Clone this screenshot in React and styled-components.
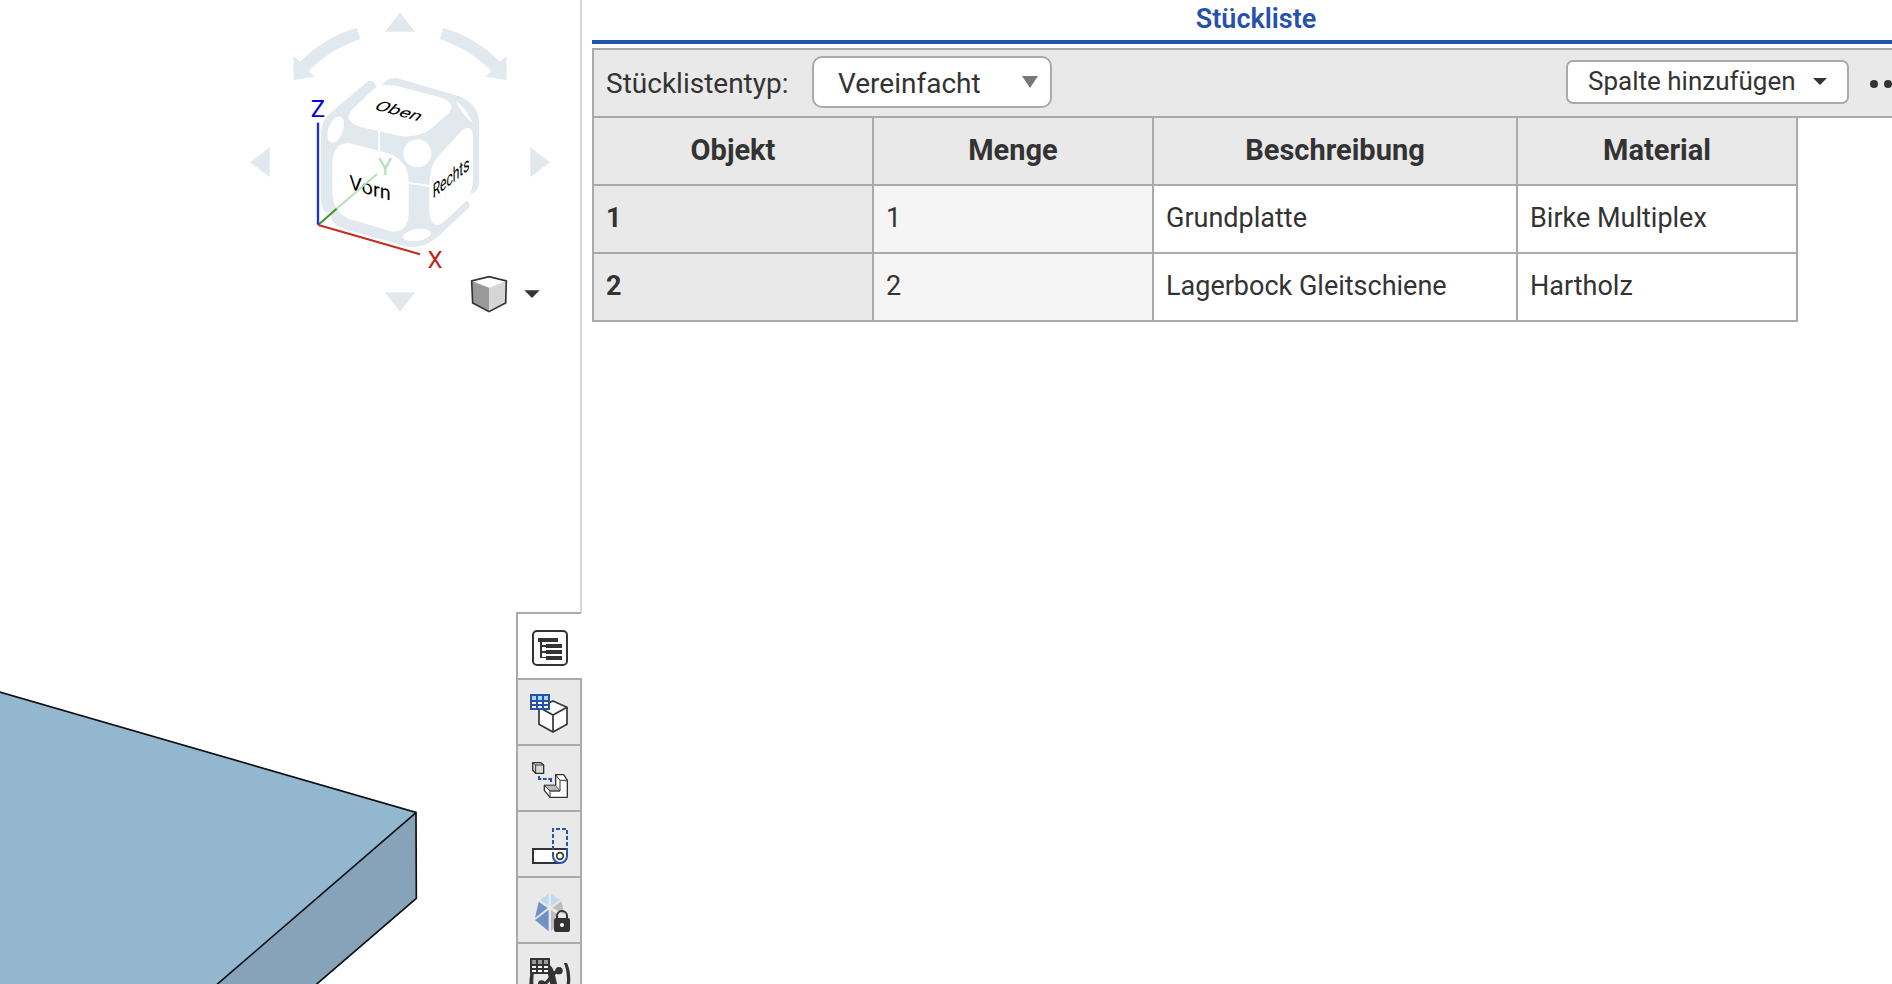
import React from "react";
import styled, { createGlobalStyle } from "styled-components";

const ink = "#333333";
const line = "#aaaaaa";
const blue = "#2651ad";
const cubeGray = "#e1e8ee";

const GlobalStyle = createGlobalStyle`
  *, *::before, *::after { box-sizing: border-box; }
  body {
    margin: 0;
    background: #ffffff;
    color: ${ink};
    font-family: Roboto, "Liberation Sans", sans-serif;
    font-size: 27px;
    line-height: 32px;
  }
`;

const Workspace = styled.main`
  display: flex;
  height: 100vh;
  overflow: hidden;
`;

const Viewport = styled.section`
  position: relative;
  flex: 0 0 582px;
  border-right: 2px solid #d5d5d5;
`;

const Model = styled.svg`
  position: absolute;
  left: 0;
  bottom: 0;
  width: 430px;
  height: 314px;
`;

const ViewNavigator = styled.div`
  position: absolute;
  top: 0;
  right: 20px;
  width: 320px;
`;

const CubeDrawing = styled.svg`
  display: block;
  width: 320px;
  height: 330px;
`;

const ViewMenuButton = styled.button`
  position: absolute;
  right: 12px;
  bottom: 12px;
  display: flex;
  padding: 0;
  border: 0;
  background: none;
  cursor: pointer;
`;

const SideTabs = styled.nav`
  position: absolute;
  top: 612px;
  right: -2px;
  bottom: 0;
  width: 66px;
  overflow: hidden;
`;

const SideTab = styled.button`
  display: block;
  width: 100%;
  height: 66px;
  padding: 0;
  border: solid ${line};
  border-width: 2px 2px 0;
  border-right-color: ${(p) => (p.$active ? "#ffffff" : line)};
  background: ${(p) => (p.$active ? "#ffffff" : "#e9e9e9")};
  cursor: pointer;

  svg {
    display: block;
    width: 62px;
    height: 64px;
  }
`;

const PanelClip = styled.section`
  flex: 1;
  min-width: 0;
  padding-left: 10px;
  overflow: hidden;
`;

const Panel = styled.div`
  margin-right: -28px;
`;

const PanelTitle = styled.h1`
  height: 44px;
  margin: 0;
  border-bottom: 4px solid ${blue};
  color: ${blue};
  font-size: 27px;
  font-weight: 600;
  line-height: 38px;
  text-align: center;
`;

const Toolbar = styled.div`
  display: flex;
  align-items: center;
  height: 70px;
  margin-top: 4px;
  padding: 0 14px 2px 12px;
  border: solid ${line};
  border-width: 2px 0 2px 2px;
  background: #e9e9e9;
`;

const TypeLabel = styled.label`
  width: 206px;
  padding-top: 4px;
  font-size: 28px;
`;

const SelectBox = styled.div`
  position: relative;
`;

const TypeSelect = styled.select`
  width: 240px;
  height: 52px;
  padding: 4px 24px 0;
  appearance: none;
  border: 2px solid ${line};
  border-radius: 10px;
  background: #ffffff;
  color: ${ink};
  font: inherit;
  font-size: 28px;
`;

const SelectArrow = styled.svg`
  position: absolute;
  top: 20px;
  right: 14px;
  width: 16px;
  height: 12px;
  pointer-events: none;
`;

const AddColumnButton = styled.button`
  display: flex;
  align-items: center;
  justify-content: space-between;
  width: 283px;
  height: 44px;
  margin-left: auto;
  padding: 0 20px 2px 20px;
  border: 2px solid ${line};
  border-radius: 7px;
  background: #ffffff;
  color: ${ink};
  font: inherit;
  font-size: 26px;
  cursor: pointer;
`;

const MoreButton = styled.button`
  display: flex;
  margin-left: 21px;
  padding: 4px 0 0;
  border: 0;
  background: none;
  cursor: pointer;
`;

const PartsTable = styled.table`
  width: 1206px;
  margin-top: -2px;
  border-collapse: collapse;
  table-layout: fixed;
`;

const Column = styled.col`
  width: ${(p) => (p.$wide ? 364 : 280)}px;
`;

const HeadCell = styled.th`
  height: 68px;
  padding: 0 12px 2px;
  border: 2px solid ${line};
  background: #e9e9e9;
  font-size: 29px;
  font-weight: 700;
`;

const RowHead = styled(HeadCell)`
  font-size: 27px;
  text-align: left;
`;

const Cell = styled.td`
  height: 68px;
  padding: 0 12px 2px;
  border: 2px solid ${line};
  background: ${(p) => (p.$computed ? "#f5f5f5" : "#ffffff")};
`;

const faceText = { fontSize: 60, fill: "#000000" };

function ViewCube() {
  return (
    <CubeDrawing viewBox="0 0 960 990" role="img" aria-label="Ansichtswürfel">
      <g fill={cubeGray}>
        <path d="M480 37 435 95H525Z" />
        <path d="M30 487 89 442V531Z" />
        <path d="M930 487 871 442V531Z" />
        <path d="M435 877H525L480 935Z" />
        <path d="M350 84Q252 112 180 186L161 168V240L224 230 206 213Q270 148 361 117Z" />
        <path d="M610 84Q708 112 780 186L799 168V240L736 230 754 213Q690 148 599 117Z" />
        <path d="M385 243Q403 238 411 262L427 258Q437 232 470 234L655 288Q717 312 717 370V550Q715 577 690 583L680 602Q692 606 688 622L592 712Q555 744 505 741L320 689Q276 676 272 650L262 642Q243 628 243 600V400Q243 362 275 335Z" />
      </g>
      <g fill="#ffffff">
        <path d="M409 262 427 257 430 266 400 272Z" />
        <path d="M400 268Q425 252 462 256L598 291Q652 308 626 340L575 385Q535 415 480 408L362 381Q310 363 332 333Z" />
        <path d="M277 490Q280 427 328 430L440 458Q506 480 506 545V640Q504 697 458 695L330 658Q280 640 277 580Z" />
        <path d="M568 560Q568 500 592 472L668 389Q697 370 699 410V535Q698 565 690 583L680 602 608 669Q575 690 568 640Z" />
        <circle cx="532" cy="460" r="42" />
        <ellipse cx="287" cy="389" rx="22" ry="41" transform="rotate(20 287 389)" />
        <ellipse cx="531" cy="705" rx="42" ry="18" transform="rotate(-9 531 705)" />
        <path d="M647 303Q675 318 700 372Q668 345 647 303Z" />
        <path d="M414 385h6v75h-6zM504 545 570 555V561L504 551Z" />
        <path d="M240 640 270 636 275 655 262 662Z" />
      </g>
      <text {...faceText} transform="matrix(0.97 0.26 -0.55 0.6 398 327)">Oben</text>
      <text {...faceText} transform="matrix(1 0.28 0 1 328 567)">Vorn</text>
      <text {...faceText} transform="matrix(0.6 -0.48 0 1 578 596)">Rechts</text>
      <g fill="none" strokeWidth="6">
        <path d="M290 626 411 522" stroke="#b9e0b4" />
        <path d="M235 674 290 626" stroke="#3c9626" />
        <path d="M235 675 540 763" stroke="#c52b20" />
        <path d="M234 368V674" stroke="#1e31d4" strokeWidth="7" />
      </g>
      <g fontSize="72" textAnchor="middle">
        <text x="234" y="350" fill="#0808cc">Z</text>
        <text x="436" y="525" fill="#b9e0b4">Y</text>
        <text x="585" y="803" fill="#c0241b">X</text>
      </g>
    </CubeDrawing>
  );
}

function Caret() {
  return (
    <svg width="14" height="7" viewBox="0 0 14 7" aria-hidden="true">
      <path d="M0 0h14L7 7Z" fill={ink} />
    </svg>
  );
}

function TreeIcon() {
  return (
    <svg viewBox="24 42 186 192" aria-hidden="true">
      <rect x="69" y="93" width="102" height="102" rx="12" fill="#fff" stroke={ink} strokeWidth="6" />
      <path
        d="M84 114h60v12H96v9h12v-3h48v12h-48v-3H96v12h12v-3h48v12h-48v-3H96v12h12v-3h48v12h-48v-6H90v-48h-6Z"
        fill={ink}
      />
    </svg>
  );
}

function GridGlyph({ x, y, frame, head }) {
  const columns = [6, 24, 42];
  return (
    <g transform={`translate(${x} ${y})`}>
      <path d="M0 0h60v48H0Z" fill={frame} />
      {columns.map((cx) => (
        <g key={cx}>
          <path d={`M${cx} 6h12v12h-12Z`} fill={head} />
          <path d={`M${cx} 24h12v6h-12ZM${cx} 36h12v6h-12Z`} fill="#fff" />
        </g>
      ))}
    </g>
  );
}

function PartTableIcon() {
  return (
    <svg viewBox="24 240 186 192" aria-hidden="true">
      <path d="M129 303 171 322V373L129 396 87 373V322Z" fill="#fff" stroke={ink} strokeWidth="5" />
      <path d="M87 322 129 345 171 322M129 345V396" fill="none" stroke={ink} strokeWidth="5" />
      <GridGlyph x={60} y={282} frame={blue} head="#a8d8f0" />
    </svg>
  );
}

function ConfigurationIcon() {
  return (
    <svg viewBox="24 18 186 192" aria-hidden="true">
      <g stroke={ink} strokeWidth="4" strokeLinejoin="round">
        <path d="M68 68H93L101 75V100H77L68 91Z" fill="#d9d9d9" />
        <path d="M68 68 77 75H101M77 75V100" fill="none" strokeWidth="3" />
        <path d="M137 104H161L172 121V172H120L103 151V136H137Z" fill="#fff" />
        <path d="M137 136 150 153H120L103 136Z" fill="#b9b9b9" strokeWidth="2" />
        <path d="M137 104 150 121H172M150 121V153H120V172M103 136 120 153" fill="none" strokeWidth="3" />
      </g>
      <path d="M87 108V117H94M99 117H110M115 117H123V126" fill="none" stroke={blue} strokeWidth="6" />
    </svg>
  );
}

function FlatPatternIcon() {
  return (
    <svg viewBox="24 66 186 192" aria-hidden="true">
      <path d="M150 177H69V219H150" fill="#fff" stroke={ink} strokeWidth="6" />
      <path d="M129 180V198A21 21 0 0 0 171 198V180Z" fill="#fff" />
      <path d="M129 198A21 21 0 0 0 171 198V186" fill="none" stroke={blue} strokeWidth="6" />
      <path d="M129 198V117H171V198" fill="none" stroke={blue} strokeWidth="6" strokeDasharray="12 6" />
      <path d="M132 177H168" stroke={ink} strokeWidth="6" />
      <circle cx="150" cy="198" r="10" fill="#fff" stroke={ink} strokeWidth="5" />
    </svg>
  );
}

function AppearanceIcon() {
  return (
    <svg viewBox="24 264 186 192" aria-hidden="true">
      <path d="M116 311V348L90 329ZM123 311 150 330 123 348Z" fill="#b9dcef" />
      <path d="M86 335 113 354 75 384ZM75 390 116 359V424Z" fill="#728fc6" />
      <path d="M154 334 163 372 127 354ZM123 360 145 374 132 386V414L123 424Z" fill="#bcbcbc" />
      <path d="M141 386V378A15 15 0 0 1 171 378V386" fill="none" stroke={ink} strokeWidth="6" />
      <rect x="132" y="384" width="48" height="42" rx="6" fill={ink} />
      <circle cx="156" cy="405" r="6" fill="#fff" />
    </svg>
  );
}

function VariableIcon() {
  return (
    <svg viewBox="24 42 186 192" aria-hidden="true">
      <path d="M162 99Q182 145 158 212L168 216Q192 145 171 99Z" fill={ink} />
      <path d="M72 126Q66 170 78 214L68 218Q52 170 62 126Z" fill={ink} />
      <path d="M110 112C130 116 126 180 148 200" fill="none" stroke={ink} strokeWidth="20" />
      <path d="M88 164C116 172 122 122 150 122" fill="none" stroke={ink} strokeWidth="10" />
      <circle cx="147" cy="122" r="11" fill={ink} />
      <circle cx="95" cy="162" r="11" fill={ink} />
      <GridGlyph x={60} y={84} frame={ink} head="#999999" />
    </svg>
  );
}

const tabs = [
  { label: "Stückliste", Icon: TreeIcon },
  { label: "Teiletabelle", Icon: PartTableIcon },
  { label: "Konfigurationen", Icon: ConfigurationIcon },
  { label: "Abwicklung", Icon: FlatPatternIcon },
  { label: "Darstellungen", Icon: AppearanceIcon },
  { label: "Variablen", Icon: VariableIcon },
];

const columns = ["Objekt", "Menge", "Beschreibung", "Material"];

const parts = [
  { item: 1, quantity: 1, description: "Grundplatte", material: "Birke Multiplex" },
  { item: 2, quantity: 2, description: "Lagerbock Gleitschiene", material: "Hartholz" },
];

export default function App() {
  return (
    <>
      <GlobalStyle />
      <Workspace>
        <Viewport>
          <Model viewBox="0 0 1290 942" aria-hidden="true">
            <path d="M0 67 1248 427 653 942H0Z" fill="#94b7d0" />
            <path d="M1248 427 1249 685 950 942H653Z" fill="#86a3b9" />
            <path d="M-9 64 1248 427 1249 685 940 951M1248 428 642 951" fill="none" stroke="#0b0f12" strokeWidth="5" />
          </Model>
          <ViewNavigator>
            <ViewCube />
            <ViewMenuButton aria-label="Ansichtsoptionen">
              <svg width="80" height="44" viewBox="684 822 240 132" aria-hidden="true">
                <path d="M747 830 799 843 797 909 747 935 698 909 695 843Z" fill="#fff" />
                <path d="M695 843 747 863V935L698 909Z" fill="#999" />
                <path d="M799 843 747 863V935L797 909Z" fill="#d6d6d6" />
                <path d="M747 830 799 843 797 909 747 935 698 909 695 843Z" fill="none" stroke={ink} strokeWidth="5" />
                <path d="M853 871H899L876 894Z" fill={ink} />
              </svg>
            </ViewMenuButton>
          </ViewNavigator>
          <SideTabs>
            {tabs.map(({ label, Icon }, index) => (
              <SideTab key={label} $active={index === 0} aria-label={label}>
                <Icon />
              </SideTab>
            ))}
          </SideTabs>
        </Viewport>
        <PanelClip>
          <Panel>
            <PanelTitle>Stückliste</PanelTitle>
            <Toolbar>
              <TypeLabel htmlFor="bom-type">Stücklistentyp:</TypeLabel>
              <SelectBox>
                <TypeSelect id="bom-type" defaultValue="simple">
                  <option value="simple">Vereinfacht</option>
                </TypeSelect>
                <SelectArrow viewBox="0 0 16 12" aria-hidden="true">
                  <path d="M0 0H16L8 12Z" fill="#777777" />
                </SelectArrow>
              </SelectBox>
              <AddColumnButton>
                Spalte hinzufügen
                <Caret />
              </AddColumnButton>
              <MoreButton aria-label="Weitere Optionen">
                <svg width="36" height="8" viewBox="0 0 36 8" aria-hidden="true">
                  <g fill={ink}>
                    <circle cx="4" cy="4" r="4" />
                    <circle cx="18" cy="4" r="4" />
                    <circle cx="32" cy="4" r="4" />
                  </g>
                </svg>
              </MoreButton>
            </Toolbar>
            <PartsTable>
              <colgroup>
                <Column />
                <Column />
                <Column $wide />
                <Column />
              </colgroup>
              <thead>
                <tr>
                  {columns.map((name) => (
                    <HeadCell key={name} scope="col">{name}</HeadCell>
                  ))}
                </tr>
              </thead>
              <tbody>
                {parts.map((part) => (
                  <tr key={part.item}>
                    <RowHead scope="row">{part.item}</RowHead>
                    <Cell $computed>{part.quantity}</Cell>
                    <Cell>{part.description}</Cell>
                    <Cell>{part.material}</Cell>
                  </tr>
                ))}
              </tbody>
            </PartsTable>
          </Panel>
        </PanelClip>
      </Workspace>
    </>
  );
}
